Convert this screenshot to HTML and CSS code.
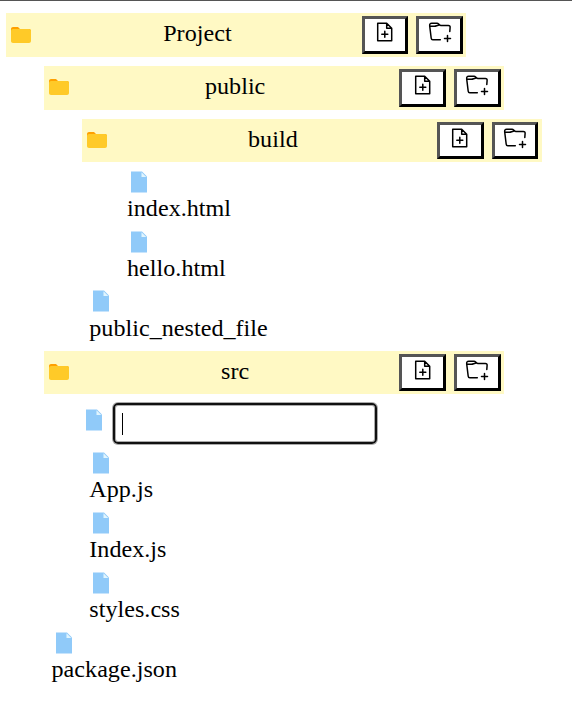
FILE: index.html
```html
<!DOCTYPE html>
<html lang="en">
<head>
<meta charset="utf-8">
<title>File explorer</title>
<link rel="stylesheet" href="styles.css">
</head>
<body>
<svg class="defs" aria-hidden="true">
  <symbol id="folder" viewBox="0 0 48 48"><path fill="#ffa000" d="M40 12H22l-4-4H8c-2.200 0-4 1.800-4 4v8h40v-4c0-2.200-1.800-4-4-4z"/><path fill="#ffca28" d="M40 12H8c-2.200 0-4 1.800-4 4v20c0 2.200 1.800 4 4 4h32c2.200 0 4-1.800 4-4V16c0-2.200-1.800-4-4-4z"/></symbol>
  <symbol id="file" viewBox="0 0 48 48"><path fill="#90caf9" d="M40 45H8V3h22l10 10z"/><path fill="#e1f5fe" d="M38.500 14H29V4.500z"/></symbol>
  <symbol id="add-file" viewBox="0 0 24 24"><path d="M4.700 3.200h9l5 5v12.500h-14zM13.700 3.200v5h5M11.800 11.300v6M8.800 14.300h6"/></symbol>
  <symbol id="add-folder" viewBox="0 0 24 24"><path d="M12.300 19.800H4.800c-1 0-1.500-.5-1.600-1.500L1.700 6c-.2-2 .5-2.700 2-2.700H9c1.700 0 2.200 2.200 4 2.200h7.300c1.400 0 1.900.6 1.800 2l-.3 4M1.800 6.300h4.600c2 0 2.300-1 4.100-1M19.500 15.500v6M16.500 18.500h6"/></symbol>
</svg>
<main class="tree">
  <div class="row"><svg class="icon"><use href="#folder"/></svg><span>Project</span><div class="actions"><button aria-label="Add file"><svg><use href="#add-file"/></svg></button><button aria-label="Add folder"><svg><use href="#add-folder"/></svg></button></div></div>
  <div class="children">
    <div class="row"><svg class="icon"><use href="#folder"/></svg><span>public</span><div class="actions"><button aria-label="Add file"><svg><use href="#add-file"/></svg></button><button aria-label="Add folder"><svg><use href="#add-folder"/></svg></button></div></div>
    <div class="children">
      <div class="row"><svg class="icon"><use href="#folder"/></svg><span>build</span><div class="actions"><button aria-label="Add file"><svg><use href="#add-file"/></svg></button><button aria-label="Add folder"><svg><use href="#add-folder"/></svg></button></div></div>
      <div class="children">
        <div class="file"><svg class="icon"><use href="#file"/></svg><span>index.html</span></div>
        <div class="file"><svg class="icon"><use href="#file"/></svg><span>hello.html</span></div>
      </div>
      <div class="file"><svg class="icon"><use href="#file"/></svg><span>public_nested_file</span></div>
    </div>
    <div class="row"><svg class="icon"><use href="#folder"/></svg><span>src</span><div class="actions"><button aria-label="Add file"><svg><use href="#add-file"/></svg></button><button aria-label="Add folder"><svg><use href="#add-folder"/></svg></button></div></div>
    <div class="children">
      <div class="new-file"><svg class="icon"><use href="#file"/></svg><div class="field" role="textbox" aria-label="File name"><i class="caret"></i></div></div>
      <div class="file"><svg class="icon"><use href="#file"/></svg><span>App.js</span></div>
      <div class="file"><svg class="icon"><use href="#file"/></svg><span>Index.js</span></div>
      <div class="file"><svg class="icon"><use href="#file"/></svg><span>styles.css</span></div>
    </div>
    <div class="file"><svg class="icon"><use href="#file"/></svg><span>package.json</span></div>
  </div>
</main>
</body>
</html>
```
FILE: styles.css
```css
* { box-sizing: border-box; }
body {
  margin: 0;
  height: 705px;
  overflow: hidden;
  border-top: 1px solid #555;
  background: #fff;
  color: #000;
  font: 24.1px/27px "Liberation Serif", "Times New Roman", serif;
  letter-spacing: .03px;
}
.defs { position: absolute; width: 0; height: 0; }
.tree { padding: 12.2px 0 0 6.2px; }
.children { padding-left: 37.75px; }
.icon { display: block; flex: none; width: 24px; height: 24px; }
.row {
  display: flex;
  align-items: center;
  justify-content: space-between;
  width: 460px;
  height: 43.5px;
  margin-bottom: 9.4px;
  padding: 0 3.4px 0 3px;
  background: #fff9c4;
}
.row > .icon { margin-top: -.8px; }
.row > span { margin-top: -3px; }
.actions { display: flex; gap: 8.2px; }
.actions button {
  width: 46.5px;
  height: 37.5px;
  padding: 0 0 4px;
  border: 3px solid;
  border-color: #555 #000 #000 #555;
  background: #fff;
}
.actions svg {
  display: block;
  width: 24px;
  height: 24px;
  margin: -2px auto 0;
  fill: none;
  stroke: #000;
  stroke-width: 1.5;
  stroke-linecap: round;
  stroke-linejoin: round;
}
.file {
  height: 52px;
  margin: -1.9px 0 9.7px;
  padding-left: 7.6px;
}
.children .children .children .file { margin-bottom: 9.6px; }
.children + .file { margin-bottom: 9.4px; }
.file .icon { margin-bottom: 1.2px; }
.new-file {
  display: flex;
  gap: 7px;
  height: 41px;
  margin: -.6px 0 9.1px;
}
.new-file .icon { margin-top: 4.500px; }
.field {
  width: 264px;
  height: 41px;
  padding: 8px 7px;
  border: 2px solid #101010;
  border-radius: 5px;
  box-shadow: 0 0 0 1px #aaa, inset 0 0 0 1px #aaa;
}
.caret { display: block; width: 1px; height: 22px; background: #000; }
```
